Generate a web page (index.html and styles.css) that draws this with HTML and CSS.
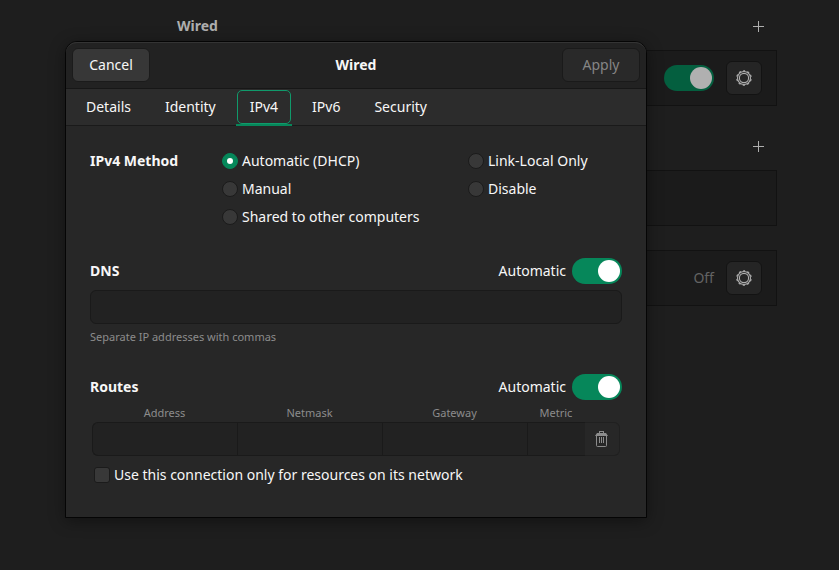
FILE: index.html
```
<!DOCTYPE html>
<html lang="en">
<head>
<meta charset="utf-8">
<meta name="viewport" content="width=device-width, initial-scale=1">
<title>Network</title>
<link rel="stylesheet" href="styles.css">
</head>
<body>
<svg class="defs" aria-hidden="true">
  <symbol id="gear" viewBox="0 0 16 16">
    <circle cx="8" cy="8" r="6.5" fill="none" stroke="currentColor" stroke-width="1.1"/>
    <circle cx="8" cy="8" r="7.2" fill="none" stroke="currentColor" stroke-width="1.2" stroke-dasharray="2.2 2.324" stroke-dashoffset="1.1" transform="rotate(-90 8 8)"/>
    <circle cx="8" cy="8" r="4.6" fill="none" stroke="currentColor" stroke-width="1.1"/>
  </symbol>
  <symbol id="plus" viewBox="0 0 11 11">
    <path d="M5 0h1v5h5v1H6v5H5V6H0V5h5z" fill="currentColor"/>
  </symbol>
  <symbol id="trash" viewBox="0 0 13 16">
    <path d="M4 0h5v2h2l2 3H0l2-3h2zM5 1v1h3V1z" fill="currentColor" fill-rule="evenodd"/>
    <path d="M1.5 5v9.5q0 1 1 1h8q1 0 1-1V5M4.5 6v6M6.5 6v6M8.5 6v6" fill="none" stroke="currentColor"/>
  </symbol>
</svg>

<main class="panel">
  <section class="group">
    <header class="group-head">
      <h2>Wired</h2>
      <button class="add" aria-label="Add wired connection"><svg><use href="#plus"/></svg></button>
    </header>
    <div class="card">
      <input class="switch" type="checkbox" role="switch" aria-label="Wired" checked>
      <button class="gear" aria-label="Wired options"><svg><use href="#gear"/></svg></button>
    </div>
  </section>
  <section class="group">
    <header class="group-head">
      <button class="add" aria-label="Add VPN"><svg><use href="#plus"/></svg></button>
    </header>
    <div class="card"></div>
  </section>
  <section class="group">
    <div class="card">
      <span class="state">Off</span>
      <button class="gear" aria-label="Proxy options"><svg><use href="#gear"/></svg></button>
    </div>
  </section>
</main>

<div class="dialog" role="dialog" aria-labelledby="dialog-title">
  <header class="titlebar">
    <button class="btn">Cancel</button>
    <h1 id="dialog-title">Wired</h1>
    <button class="btn" disabled>Apply</button>
  </header>
  <nav class="tabs" role="tablist">
    <button class="tab" role="tab">Details</button>
    <button class="tab" role="tab">Identity</button>
    <button class="tab active" role="tab" aria-selected="true"><span>IPv4</span></button>
    <button class="tab" role="tab">IPv6</button>
    <button class="tab" role="tab">Security</button>
  </nav>
  <form class="content">
    <div class="method" role="radiogroup" aria-labelledby="method-title">
      <h3 id="method-title">IPv4 Method</h3>
      <label class="choice"><input type="radio" name="method" checked>Automatic (DHCP)</label>
      <label class="choice"><input type="radio" name="method">Link-Local Only</label>
      <label class="choice second-row"><input type="radio" name="method">Manual</label>
      <label class="choice"><input type="radio" name="method">Disable</label>
      <label class="choice second-row"><input type="radio" name="method">Shared to other computers</label>
    </div>

    <section class="block">
      <div class="block-head">
        <h3 id="dns-title">DNS</h3>
        <label class="auto">Automatic<input class="switch" type="checkbox" role="switch" checked></label>
      </div>
      <input class="entry" type="text" aria-labelledby="dns-title">
      <p class="hint">Separate IP addresses with commas</p>
    </section>

    <section class="block">
      <div class="block-head">
        <h3>Routes</h3>
        <label class="auto">Automatic<input class="switch" type="checkbox" role="switch" checked></label>
      </div>
      <table class="routes">
        <colgroup><col><col><col><col class="col-metric"><col class="col-remove"></colgroup>
        <thead>
          <tr><th>Address</th><th>Netmask</th><th>Gateway</th><th>Metric</th><td></td></tr>
        </thead>
        <tbody>
          <tr>
            <td><input type="text" aria-label="Address"></td>
            <td><input type="text" aria-label="Netmask"></td>
            <td><input type="text" aria-label="Gateway"></td>
            <td><input type="text" aria-label="Metric"></td>
            <td><button type="button" class="remove" aria-label="Remove route"><svg><use href="#trash"/></svg></button></td>
          </tr>
        </tbody>
      </table>
      <label class="choice only"><input type="checkbox">Use this connection only for resources on its network</label>
    </section>
  </form>
</div>
</body>
</html>
```

FILE: styles.css
```
* { box-sizing: border-box; }

body {
  margin: 0;
  min-height: 100vh;
  background: #1e1e1e;
  color: #f7f7f7;
  font: 14px/20px "Noto Sans", sans-serif;
}

h1, h2, h3, p { margin: 0; font-size: 14px; line-height: 20px; }
h1, h2, h3 { font-weight: 700; }
button, input { font: inherit; color: inherit; margin: 0; }
.defs { position: absolute; width: 0; height: 0; }

/* Settings page behind the dialog */
.panel {
  padding: 14px 62px 0 177px;
  display: flex;
  flex-direction: column;
  gap: 24px;
  color: #aeaeae;
}
.group-head {
  display: flex;
  align-items: center;
  height: 24px;
  margin-bottom: 12px;
  padding-right: 13px;
}
.group + .group .group-head { margin-top: 4px; }
.add {
  margin-left: auto;
  padding: 0;
  border: 0;
  background: none;
  display: flex;
}
.add svg { width: 11px; height: 11px; }
.card {
  display: flex;
  align-items: center;
  justify-content: flex-end;
  gap: 12px;
  height: 56px;
  padding-right: 14px;
  border: 1px solid #121212;
  background: #1b1b1b;
}
.gear {
  display: grid;
  place-items: center;
  width: 36px;
  height: 34px;
  padding: 0;
  border: 1px solid #131313;
  border-radius: 6px;
  background: #252525;
}
.gear svg { width: 16px; height: 16px; }
.state { color: #636363; }

/* Switches */
.switch {
  appearance: none;
  display: flex;
  align-items: center;
  justify-content: flex-end;
  width: 50px;
  height: 26px;
  padding: 2px;
  border-radius: 13px;
  background: #06875a;
}
.switch::before {
  content: "";
  width: 22px;
  height: 22px;
  border-radius: 50%;
  background: #fff;
}
.switch:not(:checked) { justify-content: flex-start; background: #3a3a3a; }
.card .switch { background: #045f3f; }
.card .switch::before { background: #b0b0b0; }

/* Dialog */
.dialog {
  position: absolute;
  top: 41px;
  left: 65px;
  right: 192px;
  border: 1px solid #050505;
  border-radius: 12px 12px 0 0;
  background: #272727;
  box-shadow: 0 3px 16px rgba(0, 0, 0, .4);
}
.titlebar {
  display: flex;
  align-items: center;
  justify-content: space-between;
  height: 47px;
  padding: 0 6px 1px;
  border-top: 1px solid #343434;
  border-bottom: 1px solid #171717;
  border-radius: 11px 11px 0 0;
  background: #222;
}
.btn {
  min-width: 78px;
  height: 34px;
  padding: 0 15px;
  border: 1px solid #1b1b1b;
  border-radius: 6px;
  background: #373737;
}
.btn:disabled { color: #858585; background: #292929; border-color: #1a1a1a; }

.tabs {
  display: flex;
  gap: 6px;
  height: 37px;
  padding: 0 6px;
  border-bottom: 1px solid #1a1a1a;
  background: #2c2c2c;
}
.tab {
  height: 37px;
  padding: 0 14px 1px;
  border: 0;
  background: none;
}
.tab.active { padding: 1px 1px 0; border-bottom: 2px solid #06875a; }
.tab.active span {
  display: flex;
  align-items: center;
  height: 34px;
  padding: 0 12px;
  border: 1px solid #109a6b;
  border-radius: 5px;
}

.content { padding: 21px 24px 28px; }
.method {
  display: grid;
  grid-template-columns: 132px 246px 1fr;
  align-items: center;
}
.second-row { grid-column: 2; }
.choice { display: flex; align-items: center; gap: 4px; height: 28px; }
.choice input {
  appearance: none;
  display: grid;
  place-items: center;
  width: 16px;
  height: 16px;
  border: 1px solid #1b1b1b;
  border-radius: 50%;
  background: #383838;
}
.choice input[type="checkbox"] { border-radius: 3px; }
.choice input:checked { border-color: #06875a; background: #06875a; }
.choice input:checked::before {
  content: "";
  width: 6px;
  height: 6px;
  border-radius: 50%;
  background: #fff;
}

.block { margin-top: 27px; }
.block-head { display: flex; align-items: center; justify-content: space-between; }
.auto { display: flex; align-items: center; gap: 6px; }
.entry {
  display: block;
  width: 100%;
  height: 34px;
  margin-top: 6px;
  padding: 0 8px;
  border: 1px solid #1a1a1a;
  border-radius: 6px;
  background: #222;
}
.hint { margin-top: 3px; font-size: 11px; color: #8c8c8c; }

.routes {
  width: calc(100% - 4px);
  margin: 4px 2px 0;
  table-layout: fixed;
  border-collapse: separate;
  border-spacing: 0;
}
.col-metric { width: 58px; }
.col-remove { width: 35px; }
.routes th, .routes td { padding: 0; }
.routes th { height: 18px; font-size: 11px; line-height: 18px; font-weight: 400; color: #8c8c8c; }
.routes tbody td {
  height: 34px;
  border: 1px solid #1a1a1a;
  border-right: 0;
  background: #222;
}
.routes tbody td:first-child { border-radius: 6px 0 0 6px; }
.routes tbody td:last-child {
  border: 1px solid #202020;
  border-left: 0;
  border-radius: 0 6px 6px 0;
  background: #272727;
}
.routes input {
  display: block;
  width: 100%;
  height: 32px;
  padding: 0 8px;
  border: 0;
  background: none;
}
.remove {
  display: grid;
  place-items: center;
  width: 100%;
  height: 32px;
  padding: 0 1px 0 0;
  border: 0;
  background: none;
  color: #8c8c8c;
}
.remove svg { width: 13px; height: 16px; }
.only { margin: 5px 4px 0; }
```
